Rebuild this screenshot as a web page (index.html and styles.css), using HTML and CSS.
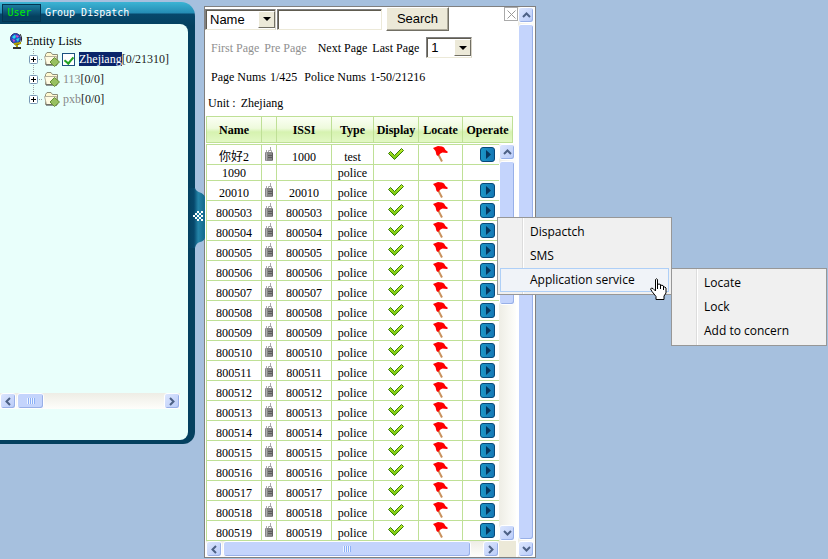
FILE: index.html
```html
<!DOCTYPE html>
<html lang="en">
<head>
<meta charset="utf-8">
<title>Group Dispatch</title>
<link rel="stylesheet" href="styles.css">
</head>
<body>
<svg class="defs" width="0" height="0" aria-hidden="true">
  <defs>
    <linearGradient id="g-check" x1="0" y1="0" x2="0" y2="1"><stop offset="0" stop-color="#c6f02c"/><stop offset="1" stop-color="#6cc40c"/></linearGradient>
    <linearGradient id="g-op" x1="0" y1="0" x2="1" y2="0"><stop offset="0" stop-color="#1c98c8"/><stop offset="1" stop-color="#1476b4"/></linearGradient>
    <linearGradient id="g-handle" x1="0" y1="0" x2="1" y2="0"><stop offset="0" stop-color="#04405f"/><stop offset=".35" stop-color="#06486c"/><stop offset=".6" stop-color="#2484a8"/><stop offset="1" stop-color="#12688c"/></linearGradient>
    <symbol id="i-check" viewBox="0 0 16 12"><path d="M.5 5.500 2.500 3.500 6.500 7.500 13.500 .5 15.500 2.500 6.500 11.500Z" fill="url(#g-check)" stroke="#347a08" stroke-linejoin="round"/></symbol>
    <symbol id="i-flag" viewBox="0 0 16 16"><path d="M4 6 9 15.500" stroke="#c8905c" stroke-width="2"/><path d="M0 2 5 0 9 .5 11 1.500 12.500 4 15 6 14 7 9.500 6.500 7.500 7.500 5 10 3.500 9 2.500 5Z" fill="#f00"/></symbol>
    <symbol id="i-op" viewBox="0 0 15 15"><rect x=".5" y=".5" width="14" height="14" rx="2.500" fill="url(#g-op)" stroke="#084878"/><path d="M6 3 11 7.500 6 12Z" fill="#06355c"/></symbol>
    <symbol id="i-radio" viewBox="0 0 9 15"><path d="M1.500 5V3M5.500 4V0M3.500 5V3.500H6.500V5" fill="none" stroke="#a8a8a8"/><rect x="0" y="5" width="8" height="9" rx="1" fill="#868686"/><path d="M1.500 5.500v8" stroke="#b0b0b0"/><path d="M3 8.500h4M3 10.500h4" stroke="#5c5c5c"/><path d="M7.500 6v7" stroke="#606060"/></symbol>
    <symbol id="i-plus" viewBox="0 0 9 9"><rect x=".5" y=".5" width="8" height="8" rx="1" fill="#fff" stroke="#7898b5"/><path d="M2 4.500h5M4.500 2v5" stroke="#000"/></symbol>
    <symbol id="i-folder" viewBox="0 0 16 16"><path d="M1.500 13.500V3.500L3 1.500H7L8.500 3.500H13.500V13.500Z" fill="#fff8d0" stroke="#8c8c78"/><path d="M.5 5.500H12.500L13.500 13.500H2.500Z" fill="#fffbe4" stroke="#b4b09c"/><path d="M2 14h11" stroke="#333"/><path d="M10.500 6.500 15.500 11 10.500 15.500 6 11Z" fill="#98c060" stroke="#648c34"/></symbol>
    <symbol id="i-up" viewBox="0 0 9 6"><path d="M1 5 4.500 1.500 8 5" fill="none" stroke="#4d6185" stroke-width="2"/></symbol>
    <symbol id="i-down" viewBox="0 0 9 6"><path d="M1 1 4.500 4.500 8 1" fill="none" stroke="#4d6185" stroke-width="2"/></symbol>
    <symbol id="i-left" viewBox="0 0 6 9"><path d="M5 1 1.500 4.500 5 8" fill="none" stroke="#4d6185" stroke-width="2"/></symbol>
    <symbol id="i-right" viewBox="0 0 6 9"><path d="M1 1 4.500 4.500 1 8" fill="none" stroke="#4d6185" stroke-width="2"/></symbol>
  </defs>
</svg>

<div class="desktop">
  <aside class="sidebar">
    <nav class="tabs">
      <button class="tab tab-active" type="button">User</button>
      <button class="tab" type="button">Group Dispatch</button>
    </nav>
    <div class="tree-pane">
      <div class="tree">
        <div class="tree-root">
          <svg width="13" height="16" viewBox="0 0 13 16" aria-hidden="true"><path d="M10 1Q13.500 6 9.500 11L5 12" fill="none" stroke="#222"/><circle cx="5.500" cy="5.500" r="5" fill="#2050c8" stroke="#302878"/><path d="M2 4 5 1.500 6 4 4 6ZM6 6 9.500 5 8 9Z" fill="#28d8e8"/><path d="M5.500 2 9 3 7 5ZM2 6 5 7 4 9.500Z" fill="#e048c0"/><path d="M4 11 11 10M7 12v2" stroke="#b4a400" stroke-width="2"/><path d="M3 15h8" stroke="#333" stroke-width="2"/></svg>
          <span>Entity Lists</span>
        </div>
        <ul class="tree-list">
          <li><svg width="9" height="9"><use href="#i-plus"/></svg><i class="dots"></i><svg width="16" height="16"><use href="#i-folder"/></svg><input class="tick" type="checkbox" checked aria-label="Zhejiang"><span class="node"><a class="selected" href="#">Zhejiang</a>[0/21310]</span></li>
          <li><svg width="9" height="9"><use href="#i-plus"/></svg><i class="dots"></i><svg width="16" height="16"><use href="#i-folder"/></svg><span class="node"><a href="#">113</a>[0/0]</span></li>
          <li><svg width="9" height="9"><use href="#i-plus"/></svg><i class="dots"></i><svg width="16" height="16"><use href="#i-folder"/></svg><span class="node"><a href="#">pxb</a>[0/0]</span></li>
        </ul>
      </div>
      <div class="bar bar-h bar-tree">
        <button class="bar-btn" type="button" aria-label="Scroll left"><svg width="6" height="9"><use href="#i-left"/></svg></button>
        <span class="thumb thumb-small"><i class="grip"></i></span>
        <span class="space"></span>
        <button class="bar-btn" type="button" aria-label="Scroll right"><svg width="6" height="9"><use href="#i-right"/></svg></button>
      </div>
    </div>
  </aside>

  <button class="handle" type="button" aria-label="Collapse">
    <svg width="17" height="60" viewBox="0 0 17 60" aria-hidden="true">
      <path d="M0 0H7Q8 3 12 4.500T17 9V50Q16 53 12 54T7 60H0Z" fill="url(#g-handle)"/>
      <path fill="#fff" d="M5 27h2v2H5zM7 25h2v2H7zM7 29h2v2H7zM9 23h2v2H9zM9 27h2v2H9zM9 31h2v2H9zM11 25h2v2h-2zM11 29h2v2h-2zM13 23h2v2h-2zM13 27h2v2h-2zM13 31h2v2h-2z"/>
    </svg>
  </button>

  <main class="panel">
    <div class="panel-main">
      <form class="search">
        <span class="combo combo-field"><select aria-label="Search field"><option>Name</option></select><i class="arrow"></i></span>
        <input class="query" type="text" aria-label="Search text">
        <button class="search-btn" type="button">Search</button>
        <button class="close" type="button" aria-label="Close"><svg width="9" height="9" viewBox="0 0 9 9"><path d="M.5.5 8.500 8.500M8.500.5.5 8.500" stroke="#999"/></svg></button>
      </form>
      <div class="pager">
        <span class="off">First Page</span><span class="off pre">Pre Page</span><a href="#">Next Page</a><a href="#">Last Page</a>
        <span class="combo combo-page"><select aria-label="Page"><option>1</option></select><i class="arrow"></i></span>
      </div>
      <div class="counts"><span>Page Nums</span><span>1/425</span><span class="police">Police Nums</span><span>1-50/21216</span></div>
      <div class="unit"><span>Unit :</span><span>Zhejiang</span></div>

      <div class="grid-area">
        <table class="grid head">
          <colgroup><col class="c-name"><col class="c-radio"><col class="c-issi"><col class="c-type"><col class="c-disp"><col class="c-loc"><col class="c-op"></colgroup>
          <thead><tr><th>Name</th><th></th><th>ISSI</th><th>Type</th><th>Display</th><th>Locate</th><th>Operate</th></tr></thead>
        </table>
        <div class="scroller">
          <div class="view">
            <table class="grid">
              <colgroup><col class="c-name"><col class="c-radio"><col class="c-issi"><col class="c-type"><col class="c-disp"><col class="c-loc"><col class="c-op"></colgroup>
              <tbody id="rows"></tbody>
            </table>
            <div class="bar bar-h">
              <button class="bar-btn" type="button" aria-label="Scroll left"><svg width="6" height="9"><use href="#i-left"/></svg></button>
              <span class="thumb thumb-wide"><i class="grip"></i></span>
              <span class="space"></span>
              <button class="bar-btn" type="button" aria-label="Scroll right"><svg width="6" height="9"><use href="#i-right"/></svg></button>
            </div>
          </div>
          <div class="side">
            <div class="bar bar-v">
              <button class="bar-btn" type="button" aria-label="Scroll up"><svg width="9" height="6"><use href="#i-up"/></svg></button>
              <span class="thumb thumb-half"></span>
              <span class="space"></span>
              <button class="bar-btn" type="button" aria-label="Scroll down"><svg width="9" height="6"><use href="#i-down"/></svg></button>
            </div>
            <div class="corner"></div>
          </div>
        </div>
      </div>
    </div>
    <div class="bar bar-v bar-panel">
      <button class="bar-btn" type="button" aria-label="Scroll up"><svg width="9" height="6"><use href="#i-up"/></svg></button>
      <span class="thumb space"></span>
      <button class="bar-btn" type="button" aria-label="Scroll down"><svg width="9" height="6"><use href="#i-down"/></svg></button>
    </div>
  </main>

  <div class="menu menu-main">
    <button type="button">Dispactch</button>
    <button type="button">SMS</button>
    <button type="button" class="hot">Application service</button>
  </div>
  <div class="menu menu-sub">
    <button type="button">Locate</button>
    <button type="button">Lock</button>
    <button type="button">Add to concern</button>
  </div>
  <svg class="pointer" width="17" height="22" viewBox="0 0 17 22" aria-hidden="true"><path d="M5.500 13V1.500Q6.500 0 7.500 1.500V8.500V6.500Q9 5.500 10.500 6.500V9V7.500Q12 6.500 13.500 8V10V9Q15 8.500 16 10V15L14 18V21.500H6V18.500L2 13.500L.5 11Q1 9.500 3 10.500Z" fill="#fff" stroke="#000"/><path d="M7.500 8v3M10.500 8v3M13.500 9v3" stroke="#000"/></svg>
</div>
<script src="app.js"></script>
</body>
</html>
```
FILE: styles.css
```css
* { box-sizing: border-box; }

body {
  margin: 0;
  background: #a6c0de;
  color: #000;
  font: 12px/16px "Liberation Serif", "Noto Sans CJK SC", serif;
}

button, select, input { font: inherit; color: inherit; margin: 0; padding: 0; }
button { border: 0; background: none; }
a { color: inherit; text-decoration: none; }
svg { display: block; flex: none; }
.defs { position: absolute; }

.desktop { position: relative; display: flex; align-items: flex-start; }

/* Left sidebar */
.sidebar {
  flex: none;
  width: 195px;
  margin-top: 2px;
  padding: 0 7px 4px 0;
  background: #04405f;
  background-image: linear-gradient(#3cb4d4 0, #248cb4 11px, #06486c 12px, #04405f 24px);
  background-size: 100% 24px;
  background-repeat: no-repeat;
  border-radius: 0 14px 12px 0;
}
.tabs { display: flex; align-items: center; gap: 4px; height: 22px; padding: 2px; }
.tab { height: 18px; color: #fff; font: 10px/16px "DejaVu Sans Mono", monospace; }
.tab-active {
  width: 39px;
  padding-right: 4px;
  color: #00f000;
  border: 1px solid #043450;
  background: linear-gradient(#1c7ca0, #04405f 70%);
}
.tree-pane { background: #e9fffb; border-radius: 0 8px 8px 0; padding: 9px 8px 31px 0; }
.tree { height: 360px; padding-left: 10px; }
.tree-root { display: flex; align-items: center; gap: 3px; height: 16px; }
.tree-list { list-style: none; margin: 0; padding: 0 0 0 19px; background: repeating-linear-gradient(#a0a0a0 0 1px, transparent 1px 2px) 23px 0 / 1px 50px no-repeat; }
.tree-list li { display: flex; align-items: center; height: 20px; }
.dots { width: 4px; height: 1px; margin: 0 1px; background: repeating-linear-gradient(90deg, #a0a0a0 0 1px, transparent 1px 2px); }
.node { margin-left: 3px; color: #222; }
.node a { color: #888; }
.tick {
  appearance: none;
  width: 13px;
  height: 13px;
  margin: 0 1px 0 2px;
  border: 1px solid #1c5180;
  background: #fff;
  position: relative;
}
.tick::after {
  content: "";
  position: absolute;
  left: 3px;
  top: 1px;
  width: 4px;
  height: 7px;
  border: solid #21a121;
  border-width: 0 2px 2px 0;
  transform: rotate(40deg);
}
.node .selected { background: #0a246a; color: #fff; }

.handle { flex: none; align-self: flex-start; margin: 188px 0 0 -7px; width: 16px; z-index: 1; }

/* Scrollbars */
.bar { display: flex; gap: 1px; background: #f5f4ef; }
.bar-h { height: 16px; background: linear-gradient(#eeede5, #fefefb); }
.bar-v { flex-direction: column; background: linear-gradient(90deg, #eeede5, #fefefb); }
.bar-btn, .thumb {
  display: flex;
  align-items: center;
  justify-content: center;
  flex: none;
  border: 1px solid #fff;
  border-radius: 3px;
  background: linear-gradient(135deg, #dce6fe, #b9cbf8);
  box-shadow: inset -1px -1px #98b0e8;
}
.bar-btn { width: 16px; height: 16px; }
.thumb { background: #c4d4fc; }
.bar-v .thumb { width: 16px; }
.bar-h .thumb { height: 16px; }
.thumb-small { width: 27px; }
.thumb-wide { width: 248px; }
.thumb-half { height: 144px; }
.bar .space { flex: 1; }
.grip { width: 8px; height: 6px; background: repeating-linear-gradient(90deg, #eef4fe 0 1px, #8cb0f8 1px 2px); }

/* Query panel */
.panel {
  flex: none;
  display: flex;
  width: 332px;
  margin: 6px 0 0;
  border: 1px solid #808080;
  background: #fff;
}
.panel-main { flex: 1; min-width: 0; }
.search { display: flex; align-items: center; height: 24px; font: 13px/16px "Liberation Sans", Arial, sans-serif; }
.combo { position: relative; display: flex; height: 21px; font: 13px/16px "Liberation Sans", Arial, sans-serif; }
.combo select {
  appearance: none;
  width: 100%;
  padding: 1px 0 0 4px;
  border: 1px solid #808080;
  border-right-color: #d8d4c8;
  border-bottom-color: #ece9d8;
  border-radius: 0;
  background: #fff;
  box-shadow: inset 1px 1px #605c50;
}
.combo-field { width: 71px; }
.combo-page { width: 46px; margin-left: 2px; }
.arrow {
  position: absolute;
  right: 1px;
  top: 2px;
  width: 17px;
  height: 17px;
  display: flex;
  align-items: center;
  justify-content: center;
  border: 1px solid;
  border-color: #fff #716f64 #716f64 #fff;
  background: #ece9d8;
  pointer-events: none;
}
.arrow::after { content: ""; border: 4px solid transparent; border-top-color: #000; border-bottom: 0; }
.query {
  width: 105px;
  height: 21px;
  margin: 0 4px 0 1px;
  border: 1px solid #808080;
  border-right-color: #ece9d8;
  border-bottom-color: #ece9d8;
  box-shadow: inset 1px 1px #605c50;
}
.search-btn {
  width: 63px;
  height: 24px;
  border: 1px solid;
  border-color: #fff #716f64 #716f64 #fff;
  box-shadow: inset -1px -1px #aca899;
  background: #ece9d8;
}
.close { display: grid; place-items: center; align-self: flex-start; width: 14px; height: 14px; margin-left: auto; border: 1px solid #aaa; }

.pager { display: flex; align-items: center; gap: 5px; height: 33px; padding-left: 6px; }
.off { color: #909090; }
.pre { margin-right: 6px; }
.counts { display: flex; align-items: center; gap: 4px; height: 26px; padding-left: 6px; }
.police { margin-left: 3px; }
.unit { display: flex; align-items: center; gap: 5px; height: 26px; padding-left: 3px; }

.grid-area { padding-left: 1px; }
.grid {
  width: 307px;
  table-layout: fixed;
  border-collapse: separate;
  border-spacing: 0;
  border: solid #bfe096;
  border-width: 1px 0 0 1px;
  text-align: center;
}
.grid th, .grid td { border: solid #bfe096; border-width: 0 1px 1px 0; padding: 0; }
.head { margin-bottom: 1px; }
.head th { height: 26px; background: linear-gradient(#fbfff4 0, #eefadc 45%, #d6f2b0 60%, #e2f8c4 100%); }
.grid td { height: 20px; line-height: 14px; padding-top: 4px; }
.grid td.icon { padding: 0; }
.grid tr.plain td { height: 16px; line-height: 14px; padding: 0; }
.icon svg { margin: 0 auto 1px; }
.c-name, .c-issi { width: 55px; }
.c-radio { width: 15px; }
.c-type { width: 42px; }
.c-disp { width: 45px; }
.c-loc { width: 44px; }
.c-op { width: 50px; }

.scroller { display: flex; }
.view { width: 293px; overflow: hidden; }
.side { display: flex; flex-direction: column; width: 17px; }
.side .bar { flex: 1; }
.corner { height: 16px; background: #ece9d8; }
.bar-panel { width: 17px; }

/* Context menus */
.menu {
  position: absolute;
  z-index: 2;
  padding: 2px;
  border: 1px solid #979797;
  background: linear-gradient(90deg, transparent 24px, #dcdcdc 24px 25px, #fff 25px 26px, transparent 26px) #f0f0f0;
}
.menu button {
  display: block;
  width: 100%;
  height: 24px;
  padding-left: 29px;
  border: 1px solid transparent;
  text-align: left;
  font: 12px/16px "Open Sans", "Noto Sans", sans-serif;
}
.menu .hot { border-color: #aecff7; background: #f0f3f8; }
.menu-main { left: 497px; top: 217px; width: 175px; }
.menu-sub { left: 671px; top: 268px; width: 156px; }
.pointer { position: absolute; z-index: 3; left: 650px; top: 278px; }
```
FILE: app.js
```js
const rows = [
  { name: "你好2", issi: "1000", type: "test" },
  { name: "1090", type: "police" },
  { name: "20010", issi: "20010", type: "police" }
];
for (let n = 800503; n <= 800519; n++) {
  rows.push({ name: String(n), issi: String(n), type: "police" });
}

const icon = (id, w, h) =>
  `<svg width="${w}" height="${h}" aria-hidden="true"><use href="#${id}"/></svg>`;

document.getElementById("rows").innerHTML = rows.map(r => r.issi
  ? `<tr><td>${r.name}</td><td class="icon">${icon("i-radio", 9, 15)}</td><td>${r.issi}</td><td>${r.type}</td>` +
    `<td class="icon">${icon("i-check", 16, 12)}</td><td class="icon">${icon("i-flag", 16, 16)}</td>` +
    `<td class="icon">${icon("i-op", 15, 15)}</td></tr>`
  : `<tr class="plain"><td>${r.name}</td><td></td><td></td><td>${r.type}</td><td></td><td></td><td></td></tr>`
).join("");
```
